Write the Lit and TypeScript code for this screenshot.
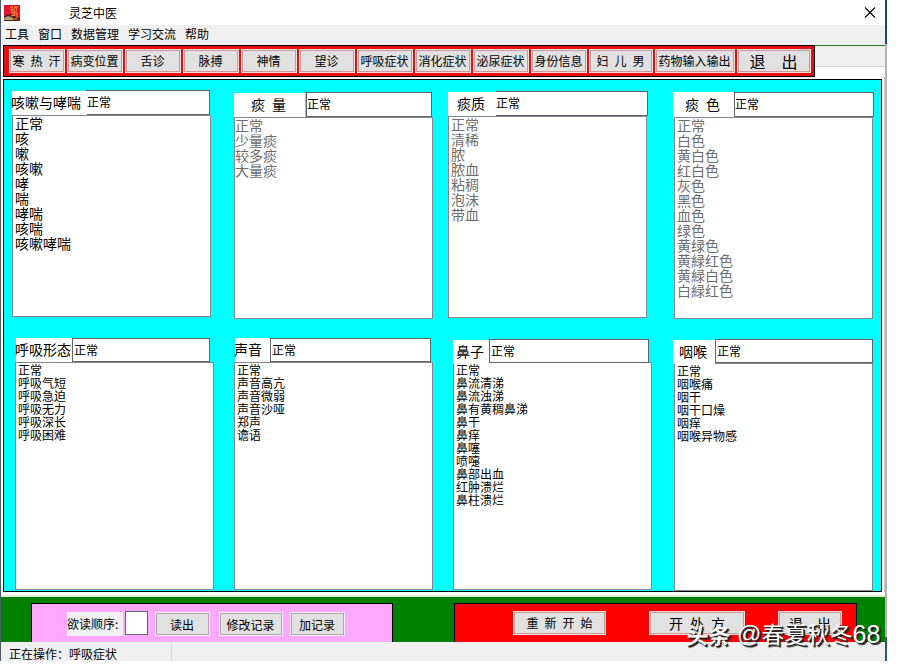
import { LitElement, html, css, svg } from "lit";
import { customElement, property } from "lit/decorators.js";
import { classMap } from "lit/directives/class-map.js";

interface Symptom {
  id: string;
  label: string;
  value: string;
  items: string[];
  disabled?: boolean;
  small?: boolean;
}

const MENUS = ["工具", "窗口", "数据管理", "学习交流", "帮助"];

const TOOLS = [
  { text: "寒 热 汗" },
  { text: "病变位置" },
  { text: "舌诊" },
  { text: "脉搏" },
  { text: "神情" },
  { text: "望诊" },
  { text: "呼吸症状" },
  { text: "消化症状" },
  { text: "泌尿症状" },
  { text: "身份信息" },
  { text: "妇 儿 男", size: "mid" },
  { text: "药物输入输出", size: "long" },
  { text: "退 出", size: "exit" },
];

const UPPER: Symptom[] = [
  { id: "p1", label: "咳嗽与哮喘", value: "正常", items: ["正常", "咳", "嗽", "咳嗽", "哮", "喘", "哮喘", "咳喘", "咳嗽哮喘"] },
  { id: "p2", label: "痰 量", value: "正常", disabled: true, items: ["正常", "少量痰", "较多痰", "大量痰"] },
  { id: "p3", label: "痰质", value: "正常", disabled: true, items: ["正常", "清稀", "脓", "脓血", "粘稠", "泡沫", "带血"] },
  { id: "p4", label: "痰 色", value: "正常", disabled: true, items: ["正常", "白色", "黄白色", "红白色", "灰色", "黑色", "血色", "绿色", "黄绿色", "黄緑红色", "黄緑白色", "白緑红色"] },
];

const LOWER: Symptom[] = [
  { id: "p5", label: "呼吸形态", value: "正常", small: true, items: ["正常", "呼吸气短", "呼吸急迫", "呼吸无力", "呼吸深长", "呼吸困难"] },
  { id: "p6", label: "声音", value: "正常", small: true, items: ["正常", "声音高亢", "声音微弱", "声音沙哑", "郑声", "谵语"] },
  { id: "p7", label: "鼻子", value: "正常", small: true, items: ["正常", "鼻流清涕", "鼻流浊涕", "鼻有黄稠鼻涕", "鼻干", "鼻痒", "鼻噻", "喷嚏", "鼻部出血", "红肿溃烂", "鼻柱溃烂"] },
  { id: "p8", label: "咽喉", value: "正常", small: true, items: ["正常", "咽喉痛", "咽干", "咽干口燥", "咽痒", "咽喉异物感"] },
];

@customElement("symptom-panel")
class SymptomPanel extends LitElement {
  @property({ attribute: false }) data!: Symptom;

  static styles = css`
    :host { display: block; flex: none; }
    .panel { width: 199px; color: #000; }
    .head { display: flex; height: 25px; }
    .label {
      flex: none; box-sizing: border-box; height: 24px; margin-top: 1px; background: #fff;
      font-size: 14px; line-height: 22px; white-space: pre; position: relative; z-index: 1;
      word-spacing: 3.9px;
    }
    .field {
      flex: none; box-sizing: border-box; height: 25px; background: #fff;
      border: 1px solid #646464; font-size: 12px; line-height: 21px; padding-left: 0;
    }
    .list {
      box-sizing: border-box; width: 199px; height: 202px; margin: 0; list-style: none;
      background: #fff; border: 1px solid #828790; padding: 0 0 0 2px;
      font-size: 14px; line-height: 15px; white-space: nowrap;
    }
    .small .head { height: 24px; }
    .small .field { height: 24px; line-height: 21px; }
    .small .list { font-size: 12px; line-height: 13px; height: 228px; }
    .disabled .list { color: #6d6d6d; }

    .p1 .label { width: 75px; line-height: 22px; text-indent: -1px; }
    .p1 .field { width: 124px; margin-left: -1px; }
    .p2 .label { width: 71px; margin-right: 1px; padding-left: 17px; }
    .p2 .field { width: 126px; }
    .p2 .list { padding-left: 0; }
    .p3 .label { width: 48px; padding-left: 9px; }
    .p3 .field { width: 152px; border-left: 0; }
    .p4 { width: 200px; }
    .p4 .label { width: 61px; height: 25px; margin-top: 0; padding-left: 12px; line-height: 24px; }
    .p4 .field { width: 140px; }
    .p4 .list, .p8 .list { margin-left: 1px; }
    .p5 .label { width: 56px; margin: 0 0 0 1px; line-height: 23px; text-indent: -1px; }
    .p5 .field { width: 138px; padding-left: 1px; }
    .p6 .label { width: 35px; margin: 0 0 0 1px; line-height: 23px; text-indent: -1px; }
    .p6 .field { width: 161px; padding-left: 1px; }
    .p7 .label { width: 36px; padding-left: 3px; line-height: 23px; }
    .p7 .field { width: 160px; padding-left: 1px; }
    .p7 .list { margin-top: -1px; }
    .p8 { width: 200px; }
    .p8 .label { width: 42px; padding-left: 6px; line-height: 23px; }
    .p8 .field { width: 158px; padding-left: 1px; }
  `;

  render() {
    const d = this.data;
    return html`<div class=${classMap({ panel: true, small: !!d.small, disabled: !!d.disabled, [d.id]: true })}>
      <div class="head"><div class="label">${d.label}</div><div class="field">${d.value}</div></div>
      <ul class="list">${d.items.map((t) => html`<li>${t}</li>`)}</ul>
    </div>`;
  }
}

@customElement("app-root")
class AppRoot extends LitElement {
  static styles = css`
    :host {
      display: block; width: 901px; height: 666px; background: #fff; overflow: hidden; color: #000;
      font: 12px/1 "Noto Sans CJK SC", sans-serif; position: relative;
    }
    .window { display: flex; width: 887px; height: 661px; }
    .left { flex: none; width: 1px; background: #4b5967; }
    .body { flex: none; width: 884px; display: flex; flex-direction: column; }
    .right { flex: none; width: 2px; display: flex; flex-direction: column; }
    .right .navy { height: 44px; background: #1c4676; }
    .right .gray { flex: 1; background: #b4b4b4; }
    .right .teal { height: 24px; background: #235a7d; }
    .title { height: 25px; display: flex; align-items: center; box-sizing: border-box; padding: 0 9px 0 3px; }
    .app { width: 16px; height: 16px; flex: none; }
    .name { margin-left: 49px; flex: 1; line-height: 22px; }
    .close { width: 12px; height: 12px; flex: none; }
    .menu { height: 20px; background: #f0f0f0; display: flex; gap: 9px; padding-left: 4px; line-height: 18px; }
    .strip { height: 32px; display: flex; }
    .tools {
      box-sizing: border-box; margin-left: 2px; width: 812px; height: 32px; background: #e60f0f;
      border: 1px solid #000; display: flex; gap: 2px; padding: 3px 0 0 5px; flex: none;
    }
    .btn {
      box-sizing: border-box; flex: none; width: 56px; height: 24px; background: #e1e1e1;
      border: 1px solid #f3dcdc; box-shadow: inset 0 0 0 1px #c99a9a;
      text-align: center; line-height: 22px; word-spacing: 3.3px; white-space: nowrap;
    }
    .tools .btn { text-indent: -1px; }
    .mid { width: 64px; }
    .long { width: 80px; }
    .exit { width: 74px; font-size: 16px; word-spacing: 12.4px; line-height: 22px; }
    .rest { flex: 1; box-sizing: border-box; height: 22px; background: #f0f0f0; border-top: 1px solid #27792a; border-bottom: 1px solid #d5d5d5; }
    .main { display: flex; flex: none; height: 515px; border-right: 1px solid #c8c8c8; }
    .board {
      box-sizing: border-box; width: 879px; height: 513px; margin: 2px 0 0 2px; flex: none;
      background: #0ff; border: 1px solid #000;
    }
    .row { display: flex; align-items: flex-start; }
    .upper { height: 258px; }
    .lower { height: 253px; }
    .at-p1 { margin: 10px 0 0 8px; }
    .at-p2 { margin: 12px 0 0 23px; }
    .at-p3 { margin: 11px 0 0 15px; }
    .at-p4 { margin: 12px 0 0 26px; }
    .at-p5 { margin: 0 0 0 11px; }
    .at-p6 { margin: 0 0 0 20px; }
    .at-p7 { margin: 1px 0 0 20px; }
    .at-p8 { margin: 1px 0 0 21px; }
    .gap { height: 5px; box-sizing: border-box; border-bottom: 2px solid #e8edd8; flex: none; }
    .foot { height: 45px; background: #008000; display: flex; align-items: flex-end; flex: none; }
    .pane { box-sizing: border-box; height: 39px; border: 1px solid #000; border-bottom: 0; display: flex; align-items: flex-start; }
    .pink { width: 362px; margin-left: 30px; background: #ffa8ff; padding: 8px 0 0 35px; }
    .red { width: 403px; margin-left: 61px; background: #f00; padding: 7px 0 0 58px; }
    .order { width: 56px; height: 24px; background: #f0f0f0; line-height: 23px; white-space: nowrap; }
    .num { box-sizing: border-box; width: 23px; height: 24px; margin: -1px 7px 0 2px; background: #fff; border: 1px solid #646464; }
    .pink .btn { border-color: #f6e6f6; box-shadow: inset 0 0 0 1px #adadad; width: 55px; line-height: 23px; text-indent: -1px; }
    .pink .edit { width: 64px; margin: 0 7px 0 9px; }
    .red .restart { width: 93px; }
    .red .rx { width: 96px; margin: 0 33px 0 43px; font-size: 14px; word-spacing: 3.9px; }
    .red .quit { width: 64px; font-size: 14px; word-spacing: 10.9px; }
    .status { height: 19px; background: #f0f0f0; display: flex; line-height: 24px; overflow: hidden; flex: none; }
    .status .text { box-sizing: border-box; width: 171px; padding-left: 8px; border-right: 1px solid #d7d7d7; }
    .mark {
      position: absolute; left: 687px; top: 618px; display: flex; align-items: center; height: 32px;
      color: #fff; font-size: 22.8px; white-space: nowrap; text-shadow: 1px 1px 0 #222, 2px 2px 1px #222;
    }
    .mark b { font-size: 22px; transform: skewX(-8deg); margin-right: 6px; font-weight: 700; }
    .mark .latin { font-family: "Liberation Sans", sans-serif; font-size: 25px; }
    .mark .at { font-size: 24px; }
  `;

  private row(list: Symptom[], cls: string) {
    return html`<div class="row ${cls}">
      ${list.map((p) => html`<symptom-panel class="at-${p.id}" .data=${p}></symptom-panel>`)}
    </div>`;
  }

  render() {
    return html`
      <div class="window">
        <div class="left"></div>
        <div class="body">
          <div class="title">
            <svg class="app" viewBox="0 0 16 16">
              ${svg`<rect width="16" height="16" fill="#e51232"/>
              <path d="M0 11 L5 9 L10 11 L16 13 V16 H0Z" fill="#5a2218"/>
              <path d="M0 13 L4 11 L9 13 V15 H0Z" fill="#a5a084"/>
              <path d="M6 2.5 L9 1.5 M8 1.5 V7 M6 5 L9 4 M11 1 L10 5 M10 3 L14 1.5 M13 2 L12 6 M7 8 L13 7 M10 5 V11 M7 11 L13 9 M13 8 V13 M8 14 H13" stroke="#f58a2c" stroke-width="1" fill="none"/>`}
            </svg>
            <div class="name">灵芝中医</div>
            <svg class="close" viewBox="0 0 12 12">
              ${svg`<path d="M1 0.5 L11 10.5 M11 0.5 L1 10.5" stroke="#000" stroke-width="1.1" fill="none"/>`}
            </svg>
          </div>
          <div class="menu">${MENUS.map((m) => html`<span>${m}</span>`)}</div>
          <div class="strip">
            <div class="tools">${TOOLS.map((t) => html`<div class="btn ${t.size ?? ""}">${t.text}</div>`)}</div>
            <div class="rest"></div>
          </div>
          <div class="main">
            <div class="board">${this.row(UPPER, "upper")}${this.row(LOWER, "lower")}</div>
          </div>
          <div class="gap"></div>
          <div class="foot">
            <div class="pane pink">
              <div class="order">欲读顺序:</div>
              <div class="num"></div>
              <div class="btn">读出</div>
              <div class="btn edit">修改记录</div>
              <div class="btn">加记录</div>
            </div>
            <div class="pane red">
              <div class="btn restart">重 新 开 始</div>
              <div class="btn rx">开 处 方</div>
              <div class="btn quit">退 出</div>
            </div>
          </div>
          <div class="status"><div class="text">正在操作：呼吸症状</div></div>
        </div>
        <div class="right"><div class="navy"></div><div class="gray"></div><div class="teal"></div></div>
      </div>
      <div class="mark"><b>头条</b><span class="latin at">@</span><span>春夏秋冬</span><span class="latin">68</span></div>
    `;
  }
}
